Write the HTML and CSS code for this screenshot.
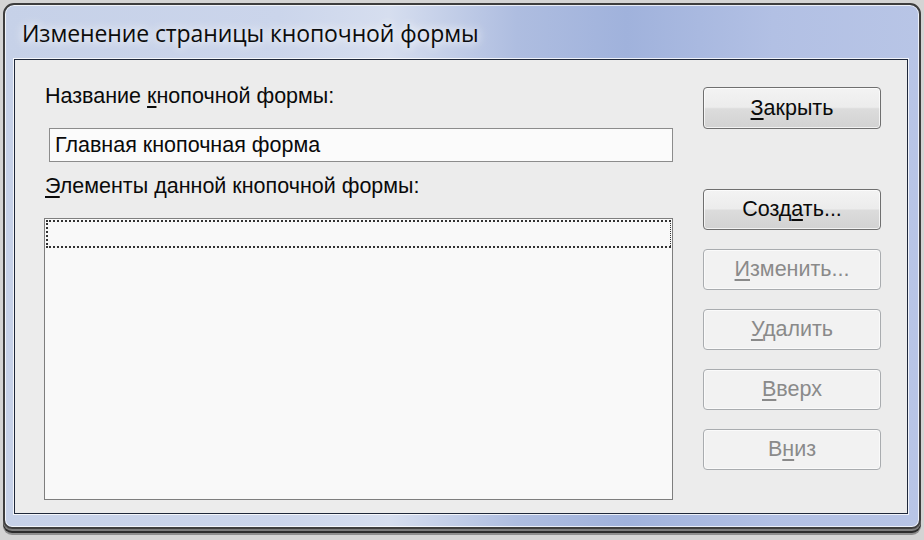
FILE: index.html
```html
<!DOCTYPE html>
<html lang="ru">
<head>
<meta charset="utf-8">
<title>Изменение страницы кнопочной формы</title>
<link rel="stylesheet" href="styles.css">
</head>
<body>
<div class="window">
  <div class="titlebar"><span class="title">Изменение страницы кнопочной формы</span></div>
  <div class="client">
    <div class="left">
      <div class="lbl lbl-name">Название <u>к</u>нопочной формы:</div>
      <div class="textbox">Главная кнопочная форма</div>
      <div class="lbl lbl-items"><u>Э</u>лементы данной кнопочной формы:</div>
      <div class="listbox"><div class="focus-row"></div></div>
    </div>
    <div class="right">
      <button class="btn btn-close"><u>З</u>акрыть</button>
      <button class="btn btn-create">Созд<u>а</u>ть...</button>
      <div class="btn-group">
        <button class="btn" disabled><u>И</u>зменить...</button>
        <button class="btn" disabled><u>У</u>далить</button>
        <button class="btn" disabled><u>В</u>верх</button>
        <button class="btn" disabled>В<u>н</u>из</button>
      </div>
    </div>
  </div>
</div>
</body>
</html>
```

FILE: styles.css
```css
* { box-sizing: border-box; }

html, body {
  margin: 0;
  padding: 0;
  width: 924px;
  height: 540px;
  overflow: hidden;
  background: #d4d4d4;
}

body {
  font-family: "Liberation Sans", Arial, sans-serif;
  padding-top: 3px;
}

.window {
  margin: 0 3px;
  height: 526px;
  border: 2px solid #3d3d3d;
  border-radius: 11px 11px 9px 9px;
  background:
    linear-gradient(90deg, #c6d1e8 0%, #cbd5eb 30%, #d6deef 42%, #aebde0 56%, #a0b2dc 68%, #b2c0e4 84%, #b8c5e6 100%);
  box-shadow:
    inset 0 0 0 1px rgba(255,255,255,0.75),
    0 2px 0 #7c7c7c,
    0 4px 0 #2c2c2c,
    0 6px 0 #8e8e8e;
  padding: 0 11px 13px 9px;
  display: flex;
  flex-direction: column;
}

.titlebar {
  height: 54px;
  flex: none;
  display: flex;
  align-items: center;
  padding-left: 8px;
  padding-top: 2px;
}

.title {
  font-family: "Open Sans", "Noto Sans", sans-serif;
  font-size: 23px;
  color: #0c0c0c;
  letter-spacing: -0.1px;
  text-shadow: 0 0 8px rgba(255,255,255,0.9), 0 0 14px rgba(255,255,255,0.7);
}

.client {
  flex: 1;
  border: 1px solid #1f283a;
  box-shadow: 0 0 0 1px rgba(255,255,255,0.8);
  background: #ececec;
  display: flex;
  padding: 23px 26px 13px 29px;
}

.left {
  width: 629px;
  flex: none;
  display: flex;
  flex-direction: column;
}

.lbl {
  font-size: 21.5px;
  line-height: 26px;
  color: #0a0a0a;
  margin-left: 1px;
}

.lbl u, .btn u { text-underline-offset: 3px; }

.textbox {
  margin-top: 19px;
  margin-left: 5px;
  height: 34px;
  border: 1px solid #8c8c8c;
  background: #fbfbfb;
  padding-left: 5px;
  font-size: 21.5px;
  line-height: 33px;
  color: #0a0a0a;
}

.lbl-items { margin-top: 11px; }

.listbox {
  margin-top: 19px;
  flex: 1;
  border: 1px solid #7e7e7e;
  background: #f9f9f9;
  padding: 1px;
}

.focus-row {
  height: 28px;
  border: 2px dotted #333;
  border-width: 2px 1px 2px 2px;
}

.right {
  width: 178px;
  flex: none;
  margin-left: 30px;
  margin-top: 4px;
  display: flex;
  flex-direction: column;
}

.btn {
  height: 41px;
  width: 178px;
  border: 1px solid #6f6f6f;
  border-radius: 4px;
  background: linear-gradient(#f3f3f3 0%, #ececec 48%, #dcdcdc 52%, #d2d2d2 100%);
  box-shadow: inset 0 0 0 1px rgba(255,255,255,0.7);
  font-family: "Liberation Sans", Arial, sans-serif;
  font-size: 21.5px;
  color: #0a0a0a;
  padding: 0;
}

.btn-close { height: 42px; }

.btn-create { margin-top: 60px; }

.btn:disabled {
  border-color: #a9acaf;
  background: #f2f2f2;
  box-shadow: inset 0 0 0 1px rgba(255,255,255,0.6);
  color: #8a8a8a;
}

.btn-group {
  margin-top: 19px;
  display: flex;
  flex-direction: column;
  gap: 19px;
}
```
